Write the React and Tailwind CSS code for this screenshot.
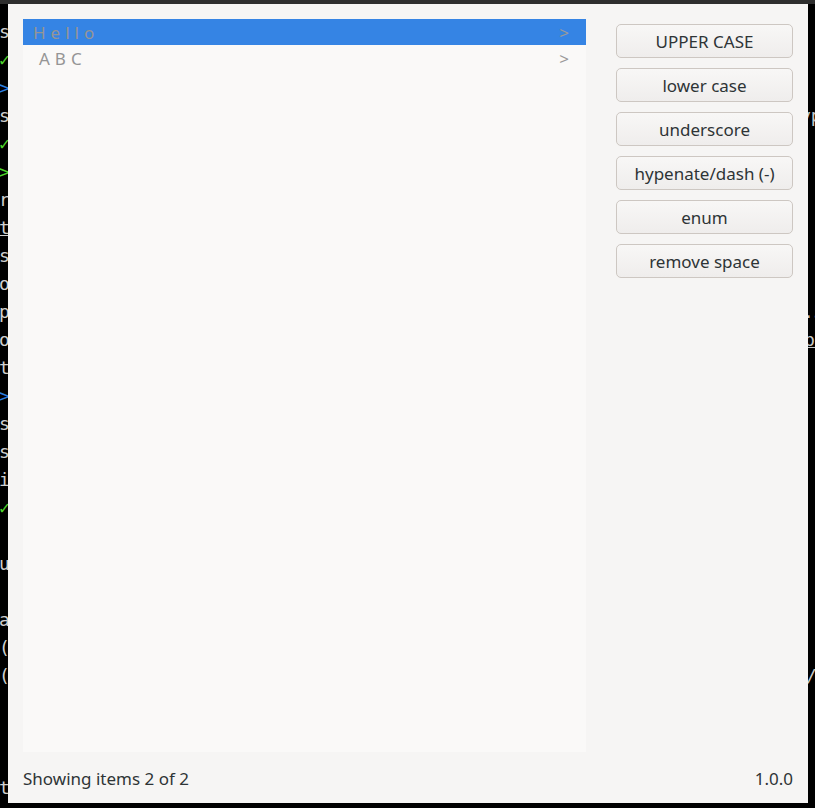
import React from "react";

const leftLines = [
  ["s", "text-[#d0d0d0]"],
  ["✓", "text-[#4ed42c]"],
  [">", "text-[#2a7ee0]"],
  ["s", "text-[#d0d0d0]"],
  ["✓", "text-[#4ed42c]"],
  [">", "text-[#4ed42c]"],
  ["r", "text-[#d0d0d0]"],
  ["t", "text-[#d0d0d0] underline"],
  ["s", "text-[#d0d0d0]"],
  ["o", "text-[#d0d0d0]"],
  ["p", "text-[#d0d0d0]"],
  ["o", "text-[#d0d0d0]"],
  ["t", "text-[#d0d0d0]"],
  [">", "text-[#2a7ee0]"],
  ["s", "text-[#d0d0d0]"],
  ["s", "text-[#d0d0d0]"],
  ["i", "text-[#d0d0d0]"],
  ["✓", "text-[#4ed42c]"],
  ["", ""],
  ["u", "text-[#d0d0d0]"],
  ["", ""],
  ["a", "text-[#d0d0d0]"],
  ["(", "text-[#d0d0d0]"],
  ["(", "text-[#d0d0d0]"],
  ["", ""],
  ["", ""],
  ["", ""],
  ["t", "text-[#d0d0d0]"],
];

const rightLines = {
  3: ["ype", "ml-[-8px]"],
  10: [".5", "ml-[-5px]"],
  11: ["be", "ml-[-4px] underline"],
  23: ["/", "ml-[-2px]"],
};

const buttons = [
  "UPPER CASE",
  "lower case",
  "underscore",
  "hypenate/dash (-)",
  "enum",
  "remove space",
];

const items = [
  { label: "Hello", selected: true, pad: "pl-[10px]" },
  { label: "ABC", selected: false, pad: "pl-[16px]" },
];

function LeftTerminal() {
  return (
    <div className="w-[8px] shrink-0 overflow-hidden pt-[14px] font-['DejaVu_Sans_Mono',monospace] text-[18px] leading-[28px]">
      {leftLines.map(([ch, cls], i) => (
        <div key={i} className={`h-[28px] ml-[-1px] whitespace-pre ${cls}`}>
          {ch}
        </div>
      ))}
    </div>
  );
}

function RightTerminal() {
  return (
    <div className="w-[7px] shrink-0 overflow-hidden pt-[14px] font-['DejaVu_Sans_Mono',monospace] text-[18px] leading-[28px] text-[#c8c8c8]">
      {Array.from({ length: 28 }).map((_, i) => (
        <div key={i} className="h-[28px] whitespace-pre">
          {rightLines[i] ? (
            <div className={rightLines[i][1]}>{rightLines[i][0]}</div>
          ) : null}
        </div>
      ))}
    </div>
  );
}

function App() {
  return (
    <div className="w-[815px] h-[808px] bg-black flex flex-col overflow-hidden">
      <div className="h-[4px] bg-[#2e2e2e] shrink-0"></div>
      <div className="flex h-[799px] shrink-0">
        <LeftTerminal />
        <div className="w-[800px] shrink-0 bg-[#f6f5f4] flex flex-col font-['Noto_Sans',sans-serif] text-[17px] text-[#2e3436]">
          <div className="flex flex-1 min-h-0 px-[15px] pt-[15px] gap-[30px]">
            <div className="w-[563px] bg-[#faf9f8] flex flex-col">
              {items.map((item) => (
                <div
                  key={item.label}
                  className={`h-[26px] pt-[2px] flex items-center justify-between pr-[17px] ${item.pad} ${
                    item.selected ? "bg-[#3584e4]" : ""
                  }`}
                >
                  <span className="tracking-[5px] text-[#959595]">
                    {item.label}
                  </span>
                  <span className="text-[#9a9a9a]">&gt;</span>
                </div>
              ))}
            </div>
            <div className="w-[177px] pt-[5px] flex flex-col gap-[10px]">
              {buttons.map((b) => (
                <button
                  key={b}
                  className="h-[34px] pt-[2px] rounded-[5px] border border-[#cdc7c2] bg-gradient-to-b from-[#f8f7f6] to-[#efedec] text-[#2e3436] flex items-center justify-center"
                >
                  {b}
                </button>
              ))}
            </div>
          </div>
          <div className="h-[51px] shrink-0 pt-[2px] flex items-center justify-between px-[15px]">
            <span>Showing items 2 of 2</span>
            <span>1.0.0</span>
          </div>
        </div>
        <RightTerminal />
      </div>
    </div>
  );
}

export default App;
